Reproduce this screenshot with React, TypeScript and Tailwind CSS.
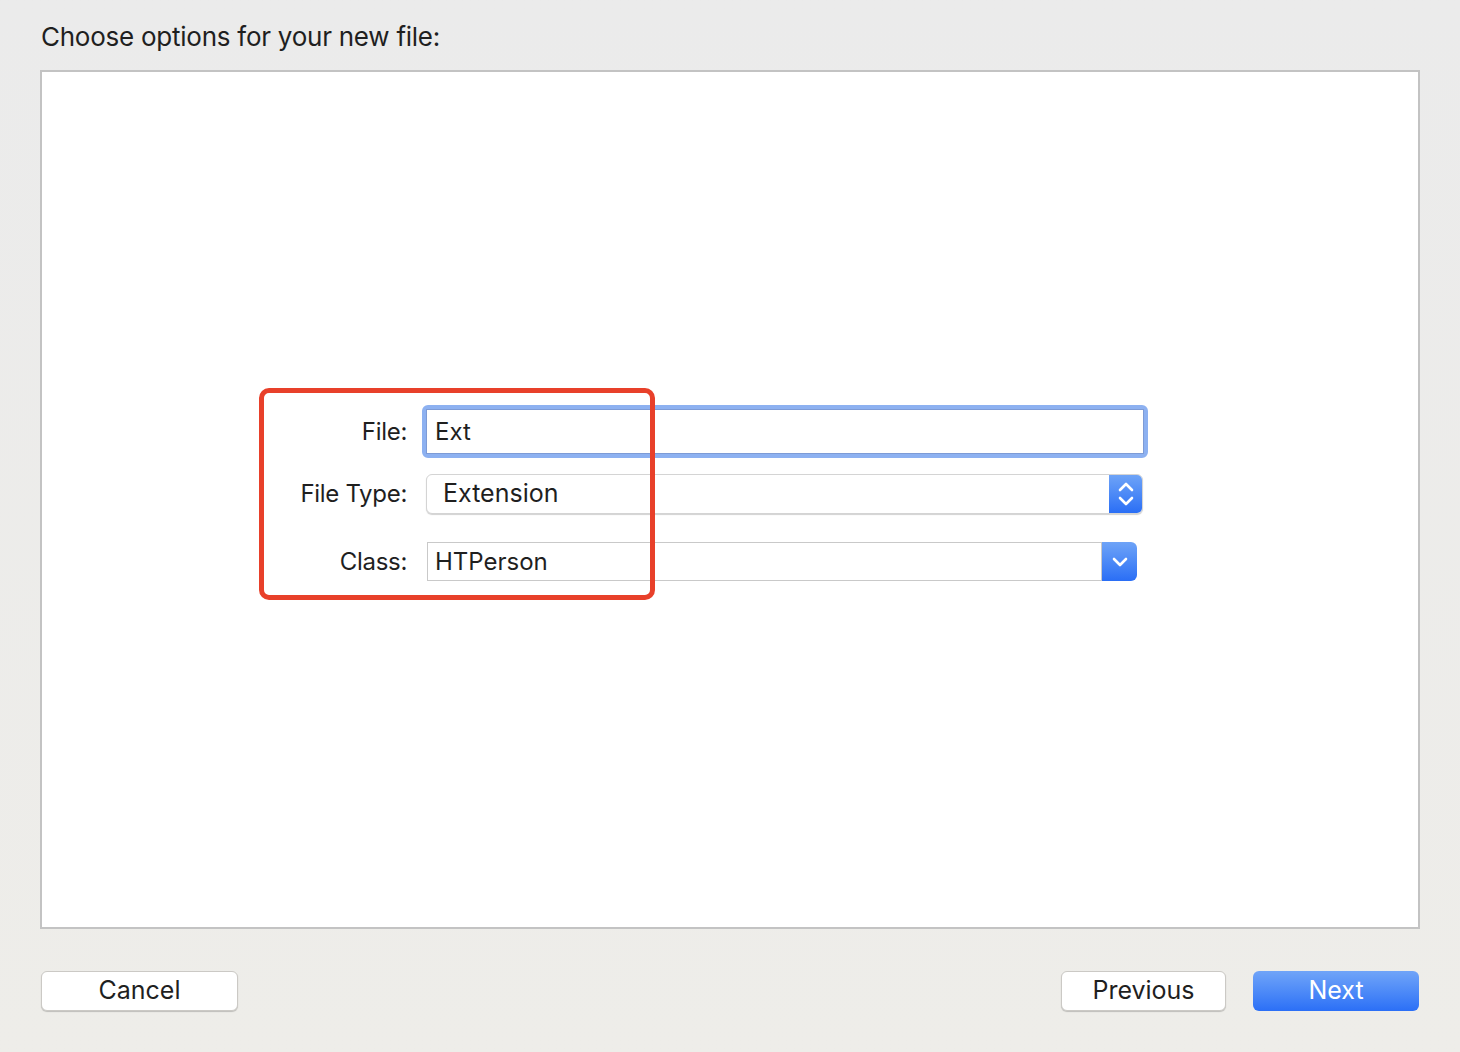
const font = { fontFamily: "Inter, 'Noto Sans', sans-serif" };

const UpDown = () => (
  <svg width="18" height="28" viewBox="0 0 18 28" fill="none" stroke="white" strokeWidth="2.6" strokeLinecap="round" strokeLinejoin="round">
    <path d="M3 10 L9 4 L15 10" />
    <path d="M3 18 L9 24 L15 18" />
  </svg>
);

const Down = () => (
  <svg width="18" height="12" viewBox="0 0 18 12" fill="none" stroke="white" strokeWidth="2.6" strokeLinecap="round" strokeLinejoin="round">
    <path d="M3 3 L9 9 L15 3" />
  </svg>
);

export default function App() {
  return (
    <div
      className="w-full h-[1052px] bg-gradient-to-b from-[#ebebeb] to-[#eeede9] text-[#1f1f1f] px-[40px]"
      style={font}
    >
      <div className="h-[70px] pt-[22px] pl-[1px] text-[26px] leading-[30px] tracking-[-0.25px]">
        Choose options for your new file:
      </div>

      <div className="h-[859px] w-[1380px] border-2 border-[#c3c3c3] bg-white pt-[333px] pl-[218px]">
        <div className="relative">
          {/* File */}
          <div className="flex items-center">
            <div className="w-[147px] text-right text-[24px] tracking-[-0.3px]">File:</div>
            <div className="ml-[15px] w-[726px] h-[53px] rounded-[6px] border-[4px] border-[#8db1f1]">
              <div className="h-full bg-white border border-[#7d9bd6] flex items-center pl-[8px] text-[24px]">
                Ext
              </div>
            </div>
          </div>

          {/* File Type */}
          <div className="flex items-center mt-[16px]">
            <div className="w-[147px] text-right text-[24px] tracking-[-0.3px]">File Type:</div>
            <div className="ml-[19px] w-[717px] h-[40px] flex rounded-[6px] bg-white border border-[#d4d4d4] shadow-[0_1px_1px_rgba(0,0,0,0.18)] overflow-hidden">
              <div className="flex-1 flex items-center pl-[16px] text-[25px]">Extension</div>
              <div className="w-[33px] h-full bg-gradient-to-b from-[#6ea3f7] to-[#2a6ef5] flex items-center justify-center">
                <UpDown />
              </div>
            </div>
          </div>

          {/* Class */}
          <div className="flex items-center mt-[28px]">
            <div className="w-[147px] text-right text-[24px] tracking-[-0.3px]">Class:</div>
            <div className="ml-[20px] w-[710px] h-[39px] flex">
              <div className="flex-1 flex items-center pl-[7px] bg-white border border-[#c9c9c9] text-[24px]">HTPerson</div>
              <div className="w-[35px] h-full rounded-r-[6px] bg-gradient-to-b from-[#6ea3f7] to-[#2a6ef5] flex items-center justify-center">
                <Down />
              </div>
            </div>
          </div>

          <div className="absolute left-[-1px] top-[-17px] w-[396px] h-[212px] border-[5px] border-[#e8402a] rounded-[10px] pointer-events-none" />
        </div>
      </div>

      <div className="flex items-center mt-[42px]">
        <button className="w-[197px] h-[40px] bg-white rounded-[6px] border border-[#cbc9c5] shadow-[0_1px_1px_rgba(0,0,0,0.2)] text-[25px] text-[#1f1f1f] ml-[1px]">
          Cancel
        </button>
        <div className="flex-1" />
        <button className="w-[165px] h-[40px] bg-white rounded-[6px] border border-[#cbc9c5] shadow-[0_1px_1px_rgba(0,0,0,0.2)] text-[25px] text-[#1f1f1f]">
          Previous
        </button>
        <button className="ml-[27px] mr-[1px] w-[166px] h-[40px] rounded-[6px] bg-gradient-to-b from-[#70a4f8] to-[#2b6ff6] text-[25px] text-white">
          Next
        </button>
      </div>
    </div>
  );
}
